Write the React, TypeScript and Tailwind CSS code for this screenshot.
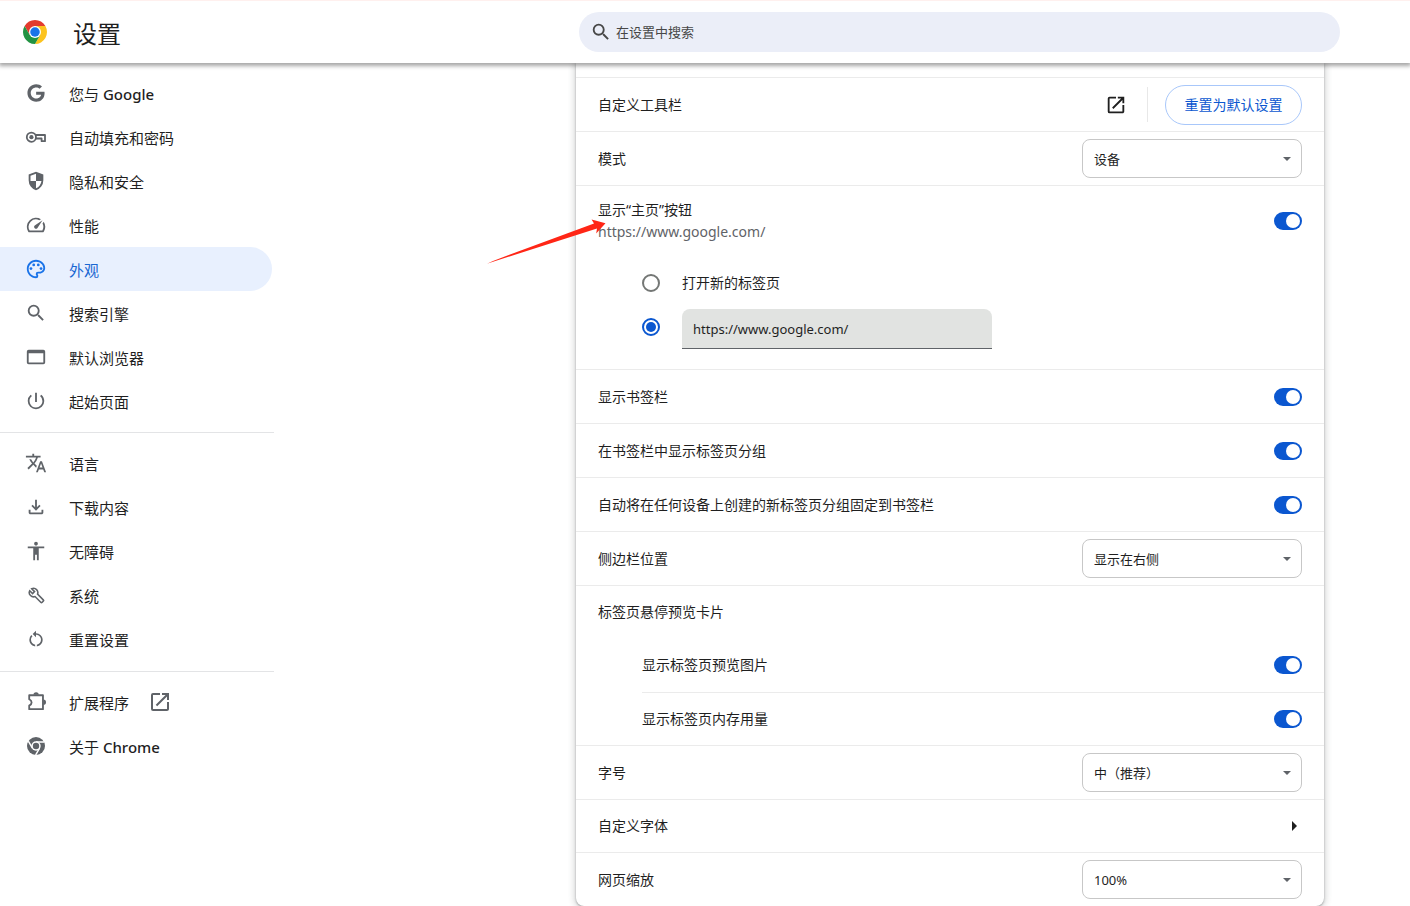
import type { ReactNode } from "react";
import { clsx } from "clsx";
import { FaGoogle } from "react-icons/fa6";
import {
  MdAccessibility,
  MdOpenInNew,
  MdOutlinePalette,
  MdPowerSettingsNew,
  MdRestartAlt,
  MdSearch,
  MdSpeed,
  MdTranslate,
} from "react-icons/md";

type NavItem = { label: string; latin?: string; icon: ReactNode; active?: boolean; external?: boolean };

const ICON = "h-[22px] w-[22px]";

const NAV: NavItem[][] = [
  [
    { label: "您与", latin: "Google", icon: <FaGoogle className="h-[18px] w-[18px]" /> },
    { label: "自动填充和密码", icon: <KeyIcon /> },
    { label: "隐私和安全", icon: <ShieldIcon /> },
    { label: "性能", icon: <MdSpeed className={ICON} /> },
    { label: "外观", icon: <MdOutlinePalette className={ICON} />, active: true },
    { label: "搜索引擎", icon: <MdSearch className={ICON} /> },
    { label: "默认浏览器", icon: <BrowserIcon /> },
    { label: "起始页面", icon: <MdPowerSettingsNew className={ICON} /> },
  ],
  [
    { label: "语言", icon: <MdTranslate className={ICON} /> },
    { label: "下载内容", icon: <DownloadIcon /> },
    { label: "无障碍", icon: <MdAccessibility className={ICON} /> },
    { label: "系统", icon: <WrenchIcon /> },
    { label: "重置设置", icon: <MdRestartAlt className="h-5 w-5" /> },
  ],
  [
    { label: "扩展程序", icon: <ExtensionIcon />, external: true },
    { label: "关于", latin: "Chrome", icon: <ChromeMark /> },
  ],
];

export default function App() {
  return (
    <div className="flex h-screen flex-col overflow-hidden bg-white font-['Noto_Sans','Noto_Sans_CJK_SC',sans-serif] text-[#1f1f1f]">
      <Header />
      <div className="flex min-h-0 flex-1">
        <Sidebar />
        <main className="min-w-0 flex-1 pl-[302px] pr-[86px]">
          <AppearanceCard />
        </main>
      </div>
    </div>
  );
}

function Header() {
  return (
    <header className="z-10 flex h-[63px] shrink-0 items-center border-t border-[#fff0ee] bg-white pl-[23px] pr-[70px] shadow-[0_2px_4px_1px_rgba(0,0,0,0.35)]">
      <ChromeLogo />
      <h1 className="w-[532px] shrink-0 pl-[26px] pt-1 text-2xl leading-8">设置</h1>
      <label className="flex h-10 min-w-0 flex-1 items-center gap-1 rounded-full bg-[#ebeef8] pl-[11px] pr-4">
        <MdSearch className="h-[22px] w-[22px] shrink-0 text-[#474747]" />
        <input
          type="search"
          aria-label="在设置中搜索"
          placeholder="在设置中搜索"
          className="min-w-0 flex-1 bg-transparent text-[13px] leading-5 outline-none placeholder:text-[#474747]"
        />
      </label>
    </header>
  );
}

function Sidebar() {
  return (
    <nav className="w-[274px] shrink-0 pt-2">
      {NAV.map((group, i) => (
        <ul key={i} className={clsx(i > 0 && "mt-[9px] border-t border-[#e3e4e6] pb-px pt-2")}>
          {group.map((item) => (
            <li key={item.label}>
              <a
                href="#"
                className={clsx(
                  "mr-[2px] flex h-11 items-center rounded-r-full pl-[25px] text-[15px] leading-5",
                  item.active && "bg-[#e8f0fe] text-[#1967d2]"
                )}
              >
                <span
                  className={clsx(
                    "mr-[22px] flex h-[22px] w-[22px] items-center justify-center",
                    item.active ? "text-[#1a73e8]" : "text-[#5f6368]"
                  )}
                >
                  {item.icon}
                </span>
                <span className="pt-px">
                  {item.label}
                  {item.latin && <span className="font-medium"> {item.latin}</span>}
                </span>
                {item.external && <MdOpenInNew className="ml-[19px] h-6 w-6 text-[#5f6368]" />}
              </a>
            </li>
          ))}
        </ul>
      ))}
    </nav>
  );
}

function AppearanceCard() {
  return (
    <section className="rounded-b-lg bg-white pt-[14px] text-sm leading-[22px] shadow-[0_1px_2px_0_rgba(60,64,67,0.4),0_1px_6px_2px_rgba(60,64,67,0.2)]">
      <Row label="自定义工具栏">
        <button type="button" aria-label="自定义工具栏">
          <MdOpenInNew className="h-[22px] w-[22px]" />
        </button>
        <div className="ml-5 mr-[17px] h-[35px] w-px bg-[#e8e8e8]" />
        <button type="button" className="h-10 w-[137px] rounded-full border border-[#a8c7fa] text-[#0b57d0]">
          重置为默认设置
        </button>
      </Row>
      <Row label="模式">
        <Select label="模式" value="设备" />
      </Row>

      <div className="relative border-t border-[#ebebeb] px-[22px] pb-5">
        <div className="flex h-[70px] items-center justify-between">
          <div>
            <div>显示“主页”按钮</div>
            <div className="text-[#5f6368]">https://www.google.com/</div>
          </div>
          <Toggle label="显示“主页”按钮" />
        </div>
        <div className="pl-11 pt-[5px]">
          <label className="flex h-11 items-center gap-[22px]">
            <Radio />
            打开新的标签页
          </label>
          <div className="flex h-11 items-center gap-[22px]">
            <Radio label="输入自定义网址" checked />
            <input
              type="text"
              aria-label="自定义网址"
              defaultValue="https://www.google.com/"
              className="h-10 w-[310px] self-end rounded-t-lg border-b border-[#5f6368] bg-[#e1e3e1] px-[11px] text-[13px] leading-5 outline-none"
            />
          </div>
        </div>
        <PointerArrow />
      </div>

      <Row label="显示书签栏">
        <Toggle label="显示书签栏" />
      </Row>
      <Row label="在书签栏中显示标签页分组">
        <Toggle label="在书签栏中显示标签页分组" />
      </Row>
      <Row label="自动将在任何设备上创建的新标签页分组固定到书签栏">
        <Toggle label="自动将在任何设备上创建的新标签页分组固定到书签栏" />
      </Row>
      <Row label="侧边栏位置">
        <Select label="侧边栏位置" value="显示在右侧" />
      </Row>

      <div className="border-t border-[#ebebeb]">
        <div className="flex h-[52px] items-center px-[22px]">标签页悬停预览卡片</div>
        <div className="pl-[66px]">
          <div className="flex h-[54px] items-center justify-between pr-[22px]">
            显示标签页预览图片
            <Toggle label="显示标签页预览图片" />
          </div>
          <div className="flex h-[53px] items-center justify-between border-t border-[#ebebeb] pr-[22px]">
            显示标签页内存用量
            <Toggle label="显示标签页内存用量" />
          </div>
        </div>
      </div>

      <Row label="字号">
        <Select label="字号" value="中（推荐）" />
      </Row>
      <a href="#" className="flex h-[53px] items-center justify-between border-t border-[#ebebeb] px-[22px]">
        自定义字体
        <svg viewBox="0 0 5 10" className="mr-[5px] h-[10px] w-[5px]" fill="currentColor">
          <path d="M0 0l5 5-5 5z" />
        </svg>
      </a>
      <Row label="网页缩放">
        <Select label="网页缩放" value="100%" />
      </Row>
    </section>
  );
}

function Row({ label, children }: { label: string; children: ReactNode }) {
  return (
    <div className="flex h-[54px] items-center justify-between border-t border-[#ebebeb] px-[22px]">
      <span>{label}</span>
      <div className="flex items-center">{children}</div>
    </div>
  );
}

function Select({ label, value }: { label: string; value: string }) {
  return (
    <div className="relative">
      <select
        aria-label={label}
        className="block h-[39px] w-[220px] appearance-none rounded-lg border border-[#c7c7c7] bg-white pl-[11px] pr-8 text-[13px] leading-5"
      >
        <option>{value}</option>
      </select>
      <svg viewBox="0 0 8 4" className="pointer-events-none absolute right-[11px] top-[18px] h-1 w-2" fill="#5f6368">
        <path d="M0 0h8L4 4z" />
      </svg>
    </div>
  );
}

function Toggle({ label }: { label: string }) {
  return (
    <input
      type="checkbox"
      role="switch"
      aria-label={label}
      defaultChecked
      className="flex h-[18px] w-7 appearance-none items-center rounded-full bg-[#c7c7c7] px-[2px] before:h-[14px] before:w-[14px] before:rounded-full before:bg-white checked:justify-end checked:bg-[#0b57d0]"
    />
  );
}

function Radio({ label, checked }: { label?: string; checked?: boolean }) {
  return (
    <input
      type="radio"
      name="homepage"
      aria-label={label}
      defaultChecked={checked}
      className="flex h-[18px] w-[18px] shrink-0 appearance-none items-center justify-center rounded-full border-2 border-[#747775] before:h-[10px] before:w-[10px] before:rounded-full checked:border-[#0b57d0] checked:before:bg-[#0b57d0]"
    />
  );
}

function PointerArrow() {
  return (
    <svg viewBox="0 0 120 46" className="pointer-events-none absolute left-[-89px] top-[33px] h-[46px] w-[120px]" fill="#ff2616">
      <path d="M0 44.8L6 41.9 107 4.4 104.6 0.6 118.5 4.2 109.2 14.6 110 9.4 6 42.8z" />
    </svg>
  );
}

function ChromeLogo() {
  return (
    <svg viewBox="0 0 48 48" className="h-6 w-6 shrink-0">
      <path fill="#e33b2e" d="M24 12h20.78A24 24 0 0 0 3.22 12l10.39 18z" />
      <path fill="#fcc31e" d="M34.39 30L24 48a24 24 0 0 0 20.78-36H24z" />
      <path fill="#229342" d="M13.61 30L3.22 12A24 24 0 0 0 24 48l10.39-18z" />
      <circle cx="24" cy="24" r="12" fill="#fff" />
      <circle cx="24" cy="24" r="9.5" fill="#1a73e8" />
    </svg>
  );
}

// single-colour version used in the menu
function ChromeMark() {
  return (
    <svg viewBox="0 0 48 48" className="h-[18px] w-[18px]">
      <circle cx="24" cy="24" r="24" fill="currentColor" />
      <path d="M24 13h22M33.5 29.5L23 48M14.5 29.5L3.5 11" stroke="#fff" strokeWidth="4" />
      <circle cx="24" cy="24" r="12.5" fill="#fff" />
      <circle cx="24" cy="24" r="8.5" fill="currentColor" />
    </svg>
  );
}

function KeyIcon() {
  return (
    <svg viewBox="0 0 22 22" className="h-[22px] w-[22px]" fill="none" stroke="currentColor" strokeWidth="1.8">
      <circle cx="6.4" cy="11.2" r="4.6" />
      <circle cx="6.4" cy="11.2" r="2.1" fill="currentColor" stroke="none" />
      <path d="M10.6 9H20v6.2h-3.4v-2.7H10.8" strokeLinejoin="round" />
    </svg>
  );
}

function BrowserIcon() {
  return (
    <svg viewBox="0 0 24 24" className="h-[22px] w-[22px]" fill="currentColor">
      <path d="M20 4H4a2 2 0 0 0-2 2v12a2 2 0 0 0 2 2h16a2 2 0 0 0 2-2V6a2 2 0 0 0-2-2zm0 14H4V8h16z" />
    </svg>
  );
}

function WrenchIcon() {
  return (
    <svg viewBox="-1 -1 26 26" className="h-[17px] w-[17px]" fill="none" stroke="currentColor" strokeWidth="2.4">
      <path d="M22.7 19l-9.1-9.1c.9-2.3.4-5-1.5-6.9-2-2-5-2.4-7.4-1.3L9 6 6 9 1.6 4.7C.4 7.1.9 10.1 2.9 12.1c1.9 1.9 4.6 2.4 6.9 1.5l9.1 9.1c.4.4 1 .4 1.4 0l2.3-2.3c.5-.4.5-1.1.1-1.4z" />
    </svg>
  );
}

function ShieldIcon() {
  return (
    <svg viewBox="0 0 24 24" className="h-[22px] w-[22px]" fill="currentColor">
      <path d="M12 22q-3.475-.875-5.738-3.988T4 11.1V5l8-3 8 3v6.1q0 3.8-2.263 6.913T12 22Zm0-2.1q2.425-.75 4.05-2.962T17.95 12H12V4.125l-6 2.25v5.175q0 .175.05.45H12Z" />
    </svg>
  );
}

function DownloadIcon() {
  return (
    <svg viewBox="0 0 24 24" className="h-[22px] w-[22px]" fill="currentColor">
      <path d="M12 16l-5-5 1.4-1.45 2.6 2.6V4h2v8.15l2.6-2.6L17 11l-5 5Zm-6 4q-.825 0-1.413-.587T4 18v-3h2v3h12v-3h2v3q0 .825-.587 1.413T18 20H6Z" />
    </svg>
  );
}

function ExtensionIcon() {
  return (
    <svg viewBox="0 0 24 24" className="h-[22px] w-[22px]" fill="currentColor">
      <path
        d="M4.6 4.6H19.6V19.8H4.6V16Q7.2 14.6 7.2 12.5T4.6 9z"
        fill="none"
        stroke="currentColor"
        strokeWidth="2"
        strokeLinejoin="round"
      />
      <path d="M9.2 4.2a2.9 2.9 0 0 1 5.8 0zM20 9.3a2.9 2.9 0 0 1 0 5.8z" />
    </svg>
  );
}
